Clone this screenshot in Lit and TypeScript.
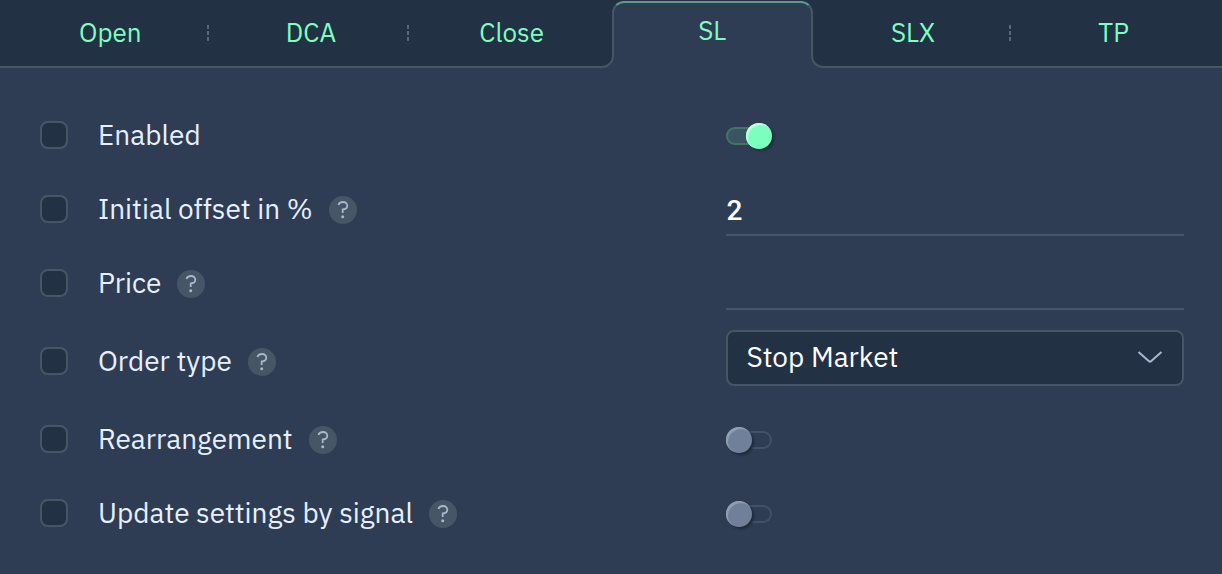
import { LitElement, html, css, svg } from "lit";
import { customElement, property, state } from "lit/decorators.js";
import { classMap } from "lit/directives/class-map.js";

interface SettingRow {
  id: string;
  label: string;
  help: boolean;
  kind: "toggle" | "text" | "select";
  value: string | boolean;
  options?: string[];
}

const TABS = ["Open", "DCA", "Close", "SL", "SLX", "TP"];

const ROWS: SettingRow[] = [
  { id: "enabled", label: "Enabled", help: false, kind: "toggle", value: true },
  { id: "offset", label: "Initial offset in %", help: true, kind: "text", value: "2" },
  { id: "price", label: "Price", help: true, kind: "text", value: "" },
  {
    id: "order-type",
    label: "Order type",
    help: true,
    kind: "select",
    value: "Stop Market",
    options: ["Stop Market"],
  },
  { id: "rearrangement", label: "Rearrangement", help: true, kind: "toggle", value: false },
  { id: "update", label: "Update settings by signal", help: true, kind: "toggle", value: false },
];

@customElement("settings-tabs")
export class SettingsTabs extends LitElement {
  static styles = css`
    :host {
      display: block;
    }
    .tabs {
      display: grid;
      grid-template-columns: repeat(6, 1fr);
      height: 68px;
      padding: 0 8px 0 10px;
      box-sizing: border-box;
      background: #223144;
      box-shadow: inset 0 -2px #475666;
    }
    .tab {
      position: relative;
      margin: 0;
      padding: 0 0 4px;
      border: 0;
      background: none;
      color: #7dffc0;
      font: 400 26px/32px "IBM Plex Sans", Roboto, sans-serif;
      cursor: pointer;
    }
    .divided::after {
      content: "";
      position: absolute;
      right: 2px;
      top: 25px;
      width: 2px;
      height: 16px;
      background: repeating-linear-gradient(#5a687a 0 4px, transparent 4px 6px);
    }
    .active {
      margin-top: 1px;
      padding-bottom: 11px;
      border: 2px solid #475666;
      border-top-color: #5f9c87;
      border-bottom: 0;
      border-radius: 12px 12px 0 0;
      background: #2e3c54;
    }
    .flare {
      position: absolute;
      bottom: 0;
      width: 12px;
      height: 12px;
    }
    .left {
      left: -12px;
    }
    .right {
      right: -12px;
      transform: scaleX(-1);
    }
  `;

  @property() active = "SL";

  private flare(side: string) {
    return html`<svg class="flare ${side}" viewBox="0 0 12 12" aria-hidden="true">
      ${svg`<path d="M0 12V11A11 11 0 0 0 11 0H12V12Z" fill="#2e3c54"/>
      <path d="M0 11A11 11 0 0 0 11 0" fill="none" stroke="#475666" stroke-width="2"/>`}
    </svg>`;
  }

  render() {
    const current = TABS.indexOf(this.active);
    return html`<div class="tabs" role="tablist">
      ${TABS.map((name, i) => {
        const on = i === current;
        const divided = !on && i !== current - 1 && i < TABS.length - 1;
        return html`<button
          class=${classMap({ tab: true, active: on, divided })}
          role="tab"
          aria-selected=${on ? "true" : "false"}
          @click=${() => (this.active = name)}
        >
          ${name}${on ? [this.flare("left"), this.flare("right")] : null}
        </button>`;
      })}
    </div>`;
  }
}

@customElement("app-root")
export class AppRoot extends LitElement {
  static styles = css`
    :host {
      display: block;
      min-height: 100vh;
      background: #2e3c54;
      color: #e6f0ff;
      font: 400 28px/36px "IBM Plex Sans", Roboto, sans-serif;
    }
    .panel {
      padding: 30px 38px 24px 40px;
    }
    .row {
      display: grid;
      grid-template-columns: 3fr 2fr;
    }
    .name {
      display: flex;
      align-items: center;
    }
    .check {
      appearance: none;
      flex: none;
      width: 28px;
      height: 28px;
      margin: 0 30px 0 0;
      box-sizing: border-box;
      border: 2px solid #475666;
      border-radius: 8px;
      background: #223144;
    }
    .check:checked {
      background: #7dffc0;
    }
    .help {
      display: grid;
      place-items: center;
      width: 28px;
      height: 28px;
      margin: 2px 0 0 16px;
      padding: 0;
      border: 0;
      border-radius: 50%;
      background: #475666;
      color: #a9b8cd;
    }
    .mark {
      width: 12px;
      height: 18px;
    }
    .field {
      display: flex;
      align-items: center;
      min-height: 54px;
      margin: 10px 0;
    }
    .toggle-field {
      box-sizing: border-box;
      padding-top: 2px;
    }
    .select-field {
      position: relative;
      margin-bottom: 16px;
    }
    .text,
    .select {
      width: 100%;
      box-sizing: border-box;
      margin: 0;
      color: #fff;
      font: inherit;
      outline: none;
    }
    .text {
      height: 54px;
      padding: 4px 0 0;
      border: 0;
      border-bottom: 2px solid #475666;
      border-radius: 0;
      background: none;
      font-family: Roboto, sans-serif;
      font-weight: 500;
    }
    .select {
      appearance: none;
      height: 56px;
      padding: 0 50px 2px 18px;
      border: 2px solid #475666;
      border-radius: 8px;
      background: #223144;
    }
    .chevron {
      position: absolute;
      right: 21px;
      top: 20px;
      width: 26px;
      height: 14px;
      pointer-events: none;
    }
    .switch {
      appearance: none;
      display: flex;
      align-items: center;
      width: 46px;
      height: 18px;
      margin: 0;
      box-sizing: border-box;
      border-radius: 9px;
      box-shadow: inset 0 0 0 2px #435164;
    }
    .switch::before {
      content: "";
      flex: none;
      width: 26px;
      height: 26px;
      border-radius: 50%;
      background: #70809a;
      box-shadow: inset 2px 2px 1px #93a0b4, 2px 2px 2px #202b3c;
    }
    .switch:checked {
      justify-content: flex-end;
      background: #395560;
      box-shadow: inset 0 0 0 2px #437269;
    }
    .switch:checked::before {
      background: #7affbc;
      box-shadow: inset 2px 2px 1px #bcffde, 2px 2px 2px #202b3c;
    }
  `;

  @state() private rows = ROWS;

  private control(row: SettingRow) {
    if (row.kind === "toggle") {
      return html`<div class="field toggle-field">
        <input class="switch" id=${row.id} type="checkbox" role="switch" .checked=${row.value as boolean} />
      </div>`;
    }
    if (row.kind === "text") {
      return html`<div class="field">
        <input class="text" id=${row.id} type="text" inputmode="decimal" .value=${row.value as string} />
      </div>`;
    }
    return html`<div class="field select-field">
      <select class="select" id=${row.id}>
        ${row.options!.map((o) => html`<option ?selected=${o === row.value}>${o}</option>`)}
      </select>
      <svg class="chevron" viewBox="0 0 26 14" aria-hidden="true">
        <path d="M1.5 2 12 11.2Q13 12 14 11.2L24.5 2" fill="none" stroke="#a9b8cd" stroke-width="2" />
      </svg>
    </div>`;
  }

  render() {
    return html`
      <settings-tabs active="SL"></settings-tabs>
      <main class="panel">
        ${this.rows.map(
          (row) => html`<div class="row">
            <div class="name">
              <input class="check" type="checkbox" aria-label="Select ${row.label}" />
              <label for=${row.id}>${row.label}</label>
              ${row.help
                ? html`<button class="help" aria-label="Help: ${row.label}">
                    <svg class="mark" viewBox="0 0 12 18" aria-hidden="true">
                      <path
                        d="M1.5 4C2 2.2 3.6 1 6 1C8.800 1 10.300 2.600 10.300 4.700C10.300 6.900 8.900 8.200 5.700 8.500V12"
                        fill="none"
                        stroke="currentColor"
                        stroke-width="1.8"
                      />
                      <circle cx="5.700" cy="15.800" r="1.500" fill="currentColor" />
                    </svg>
                  </button>`
                : null}
            </div>
            ${this.control(row)}
          </div>`
        )}
      </main>
    `;
  }
}
